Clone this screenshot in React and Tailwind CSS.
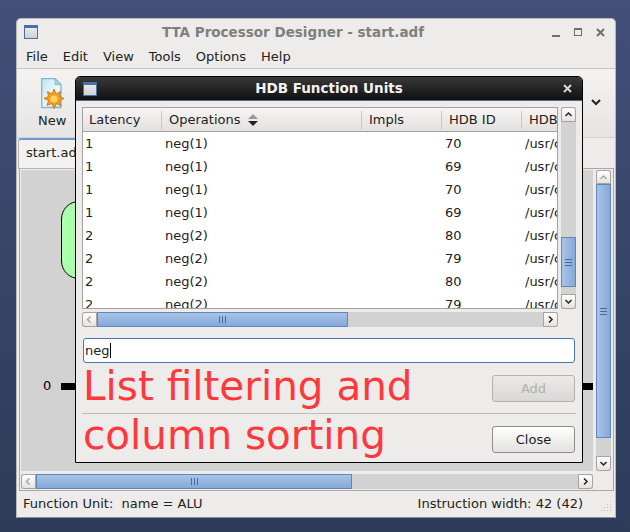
import React from "react";

const rows = [
  ["1", "neg(1)", "70"],
  ["1", "neg(1)", "69"],
  ["1", "neg(1)", "70"],
  ["1", "neg(1)", "69"],
  ["2", "neg(2)", "80"],
  ["2", "neg(2)", "79"],
  ["2", "neg(2)", "80"],
  ["2", "neg(2)", "79"],
];

const menus = ["File", "Edit", "View", "Tools", "Options", "Help"];

const Chevron = ({ dir }) => {
  const paths = {
    up: "M1.5 6 L4.5 3 L7.5 6",
    down: "M1.5 3 L4.5 6 L7.5 3",
    left: "M5.5 1.5 L2.5 4.5 L5.5 7.5",
    right: "M3 1.5 L6 4.5 L3 7.5",
  };
  return (
    <svg width="9" height="9" viewBox="0 0 9 9">
      <path d={paths[dir]} fill="none" stroke="currentColor" strokeWidth="1.5" />
    </svg>
  );
};

const ScrollButton = ({ dir, className = "", disabled }) => (
  <div
    className={`flex items-center justify-center shrink-0 bg-gradient-to-b from-white to-[#e4e3e1] border border-[#a5a4a1] ${
      disabled ? "text-[#a8a7a5]" : "text-[#222]"
    } ${className}`}
  >
    <Chevron dir={dir} />
  </div>
);

const Grip = ({ vertical }) =>
  vertical ? (
    <div className="flex flex-col gap-[2px]">
      <div className="w-[7px] h-px bg-[#4a6a9c]" />
      <div className="w-[7px] h-px bg-[#4a6a9c]" />
      <div className="w-[7px] h-px bg-[#4a6a9c]" />
    </div>
  ) : (
    <div className="flex gap-[2px]">
      <div className="w-px h-[7px] bg-[#4a6a9c]" />
      <div className="w-px h-[7px] bg-[#4a6a9c]" />
      <div className="w-px h-[7px] bg-[#4a6a9c]" />
    </div>
  );

const WindowIcon = () => (
  <div className="w-[14px] h-[14px] border border-[#4a6ea8] border-t-[3px] bg-gradient-to-b from-[#e6e8ea] to-[#cfd2d2]" />
);

const NewIcon = () => (
  <svg width="24" height="31" viewBox="0 0 24 31" className="block">
    <defs>
      <linearGradient id="pg" x1="0" y1="0" x2="1" y2="1">
        <stop offset="0" stopColor="#bfe3ee" />
        <stop offset="0.6" stopColor="#eef9fb" />
        <stop offset="1" stopColor="#bfe0ea" />
      </linearGradient>
    </defs>
    <path d="M0.7 0.7 H14 L20 6.7 V29.5 H0.7 Z" fill="url(#pg)" stroke="#7fb8c8" strokeWidth="1.3" />
    <path d="M14 0.7 V6.7 H20 Z" fill="#a9d6e2" stroke="#7fb8c8" strokeWidth="0.8" />
    <path
      d="M13 11 L15 16 L19.5 13.5 L18.5 18.5 L23 20.5 L18.5 22.5 L20 27.5 L15.5 25.5 L13 30.5 L11 25.5 L6 27.5 L7.5 22.5 L3 20.5 L7.5 18.5 L6.5 13.5 L11 16 Z"
      fill="#f4a020"
      stroke="#c9660f"
      strokeWidth="0.8"
    />
    <circle cx="13" cy="21" r="3.5" fill="#fbd35a" />
  </svg>
);

const ResizeGrip = () => (
  <svg width="12" height="12" viewBox="0 0 12 12" className="absolute right-[3px] bottom-[4px]">
    <g fill="#bdbcb9">
      <rect x="10" y="0" width="1" height="1" />
      <rect x="7" y="3" width="1" height="1" />
      <rect x="10" y="3" width="1" height="1" />
      <rect x="4" y="6" width="1" height="1" />
      <rect x="7" y="6" width="1" height="1" />
      <rect x="10" y="6" width="1" height="1" />
      <rect x="1" y="9" width="1" height="1" />
      <rect x="4" y="9" width="1" height="1" />
      <rect x="7" y="9" width="1" height="1" />
      <rect x="10" y="9" width="1" height="1" />
    </g>
  </svg>
);

export default function App() {
  return (
    <div
      className="relative w-[630px] h-[532px] overflow-hidden bg-gradient-to-b from-[#434f78] to-[#2b3b58] pt-[18px] pl-[16px] text-[13px] text-[#222]"
      style={{ fontFamily: '"DejaVu Sans", sans-serif' }}
    >
      {/* main window */}
      <div className="w-[600px] h-[500px] flex flex-col bg-[#edecea] rounded-t-[5px] border border-[#b9b8b5] border-b-[#8f8f8f]">
        <div className="h-[26px] shrink-0 flex items-center relative pl-[7px] pr-[10px]">
          <WindowIcon />
          <div className="absolute left-0 right-[46px] text-center font-bold text-[#7f7f7d] text-[13.5px]">
            TTA Processor Designer - start.adf
          </div>
          <div className="ml-auto flex items-center gap-[14px] text-[#6f6f6d]">
            <div className="w-[8px] h-[2px] bg-[#6f6f6d] mt-[8px]" />
            <div className="w-[8px] h-[8px] border border-[#6f6f6d] border-t-2" />
            <svg width="9" height="9" viewBox="0 0 9 9">
              <path d="M1 1 L8 8 M8 1 L1 8" stroke="currentColor" strokeWidth="2" />
            </svg>
          </div>
        </div>
        <div className="h-[24px] shrink-0 flex items-center gap-[15px] pl-[9px] border-b border-[#c6c5c2]">
          {menus.map((m) => (
            <span key={m}>{m}</span>
          ))}
        </div>
        <div className="h-[69px] shrink-0 bg-gradient-to-b from-[#f4f3f1] to-[#e6e5e3] border-b border-[#d4d3d0] flex pl-[21px] relative">
          <div className="flex flex-col items-start pt-[9px]">
            <div className="ml-[3px]">
              <NewIcon />
            </div>
            <span className="mt-[2px]">New</span>
          </div>
          <div className="absolute left-[573px] top-[29px] text-[#222]">
            <svg width="12" height="9" viewBox="0 0 12 9">
              <path d="M2 2 L6 6 L10 2" fill="none" stroke="currentColor" strokeWidth="2" />
            </svg>
          </div>
        </div>
        <div className="flex-1 flex flex-col min-h-0 pl-[2px] pr-[1px]">
          <div className="w-[62px] h-[31px] -ml-px -mb-px relative shrink-0 bg-[#f2f1ef] border border-[#b5b4b1] border-t-2 border-t-[#6f9ad0] rounded-t-[3px] pl-[7px] pt-[3px]">
            start.adf
          </div>
          <div className="flex-1 min-h-0 border border-[#a8a7a4] bg-[#edecea] flex flex-col pt-px pl-px pr-[2px] pb-px">
            <div className="h-[301px] shrink-0 flex gap-[3px]">
              <div className="flex-1 bg-[#d2d2d2] relative">
                <div className="absolute left-[40px] top-[31px] w-[60px] h-[78px] bg-[#aaffaa] border border-black rounded-[18px]" />
                <div className="absolute left-[22px] top-[206px] text-black">0</div>
                <div className="absolute left-[40px] top-[213px] w-[20px] h-[7px] bg-black" />
                <div className="absolute left-[562px] top-[213px] w-[10px] h-[7px] bg-black" />
              </div>
              <div className="w-[15px] flex flex-col shrink-0 bg-[#d2d2d2]">
                <ScrollButton dir="up" disabled className="h-[14px] rounded-t-[3px]" />
                <div className="h-[254px] bg-gradient-to-r from-[#a9c4e6] to-[#85a9d8] border border-[#5f87bd] flex items-center justify-center">
                  <Grip vertical />
                </div>
                <div className="flex-1" />
                <ScrollButton dir="down" className="h-[15px] rounded-b-[3px]" />
              </div>
            </div>
            <div className="w-[572px] h-[15px] shrink-0 flex bg-[#d2d2d2] mt-[3px]">
              <ScrollButton dir="left" disabled className="w-[15px] rounded-l-[3px]" />
              <div className="w-[316px] bg-gradient-to-b from-[#a9c4e6] to-[#85a9d8] border border-[#5f87bd] flex items-center justify-center">
                <Grip />
              </div>
              <div className="flex-1" />
              <ScrollButton dir="right" className="w-[15px] rounded-r-[3px]" />
            </div>
          </div>
        </div>
        <div className="h-[26px] shrink-0 flex items-center pl-[6px] pr-[32px] justify-between relative">
          <span>Function Unit:&nbsp; name = ALU</span>
          <span>Instruction width: 42 (42)</span>
          <ResizeGrip />
        </div>
      </div>

      {/* dialog over the main window */}
      <div className="absolute left-[75px] top-[76px] w-[508px] h-[387px] flex flex-col bg-[#edecea] border border-black rounded-t-[5px]">
        <div className="h-[24px] shrink-0 relative flex items-center pl-[7px] pr-[10px] bg-gradient-to-b from-[#3a3a3a] to-[#111] rounded-t-[4px] border-b border-[#4a6a94]">
          <WindowIcon />
          <div className="absolute inset-x-0 text-center font-bold text-[#f2f2f2] text-[13.5px]">
            HDB Function Units
          </div>
          <svg width="9" height="9" viewBox="0 0 9 9" className="ml-auto text-[#d8d8d8]">
            <path d="M1 1 L8 8 M8 1 L1 8" stroke="currentColor" strokeWidth="2" />
          </svg>
        </div>
        <div className="flex-1 min-h-0 flex flex-col px-[6px] pt-[6px]">
          <div className="flex gap-[3px] h-[202px] shrink-0">
            <div className="w-[476px] border border-[#a3a2a0] bg-white overflow-hidden">
              <div className="h-[24px] flex items-center bg-gradient-to-b from-[#f6f5f4] to-[#e2e1df] border-b border-[#a3a2a0]">
                <div className="w-[78px] pl-[6px]">Latency</div>
                <div className="w-[200px] pl-[7px] border-l border-[#c8c7c5] h-[18px] flex items-center gap-[7px]">
                  Operations
                  <svg width="12" height="16" viewBox="0 0 12 16">
                    <path d="M6 2 L11 7 H1 Z" fill="#9a9a9a" />
                    <path d="M6 14 L11 9 H1 Z" fill="#222" />
                  </svg>
                </div>
                <div className="w-[80px] pl-[7px] border-l border-[#c8c7c5] h-[18px] flex items-center">Impls</div>
                <div className="w-[80px] pl-[7px] border-l border-[#c8c7c5] h-[18px] flex items-center">HDB ID</div>
                <div className="flex-1 pl-[7px] border-l border-[#c8c7c5] h-[18px] flex items-center overflow-hidden">HDB</div>
              </div>
              {rows.map((r, i) => (
                <div key={i} className="h-[23px] flex items-center whitespace-nowrap">
                  <div className="w-[82px] pl-[2px]">{r[0]}</div>
                  <div className="w-[280px]">{r[1]}</div>
                  <div className="w-[80px]">{r[2]}</div>
                  <div className="flex-1 overflow-hidden">/usr/c</div>
                </div>
              ))}
            </div>
            <div className="w-[15px] flex flex-col shrink-0 bg-[#d2d2d2]">
              <ScrollButton dir="up" className="h-[15px] rounded-t-[3px]" />
              <div className="h-[115px]" />
              <div className="h-[50px] bg-gradient-to-r from-[#a9c4e6] to-[#85a9d8] border border-[#5f87bd] flex items-center justify-center">
                <Grip vertical />
              </div>
              <div className="flex-1" />
              <ScrollButton dir="down" className="h-[15px] rounded-b-[3px]" />
            </div>
          </div>
          <div className="w-[476px] h-[15px] shrink-0 mt-[3px] flex bg-[#d2d2d2]">
            <ScrollButton dir="left" disabled className="w-[15px] rounded-l-[3px]" />
            <div className="w-[251px] bg-gradient-to-b from-[#a9c4e6] to-[#85a9d8] border border-[#5f87bd] flex items-center justify-center">
              <Grip />
            </div>
            <div className="flex-1" />
            <ScrollButton dir="right" className="w-[15px] rounded-r-[3px]" />
          </div>
          <div className="ml-px w-[492px] h-[25px] shrink-0 mt-[11px] bg-white border border-[#4a76b0] rounded-[3px] flex items-center pl-px">
            neg<span className="w-px h-[15px] bg-black" />
          </div>
          <div className="flex justify-end mt-[12px] mr-px">
            <button className="w-[83px] h-[27px] rounded-[3px] border border-[#b3b2b0] bg-gradient-to-b from-[#ebeae8] to-[#d9d8d6] text-[#b0afad]">
              Add
            </button>
          </div>
          <div className="h-px bg-[#bdbcba] mt-[11px] w-[494px]" />
          <div className="flex justify-end mt-[12px] mr-px">
            <button className="w-[83px] h-[27px] rounded-[3px] border border-[#8e8d8b] bg-gradient-to-b from-white to-[#e2e1df] text-[#1c1c1c]">
              Close
            </button>
          </div>
        </div>
        {/* caption laid on top of the dialog */}
        <div className="absolute left-[7px] top-[285px] w-[400px] text-[40.5px] leading-[49px] text-[#ff383c]">
          List filtering and column sorting
        </div>
      </div>
    </div>
  );
}
